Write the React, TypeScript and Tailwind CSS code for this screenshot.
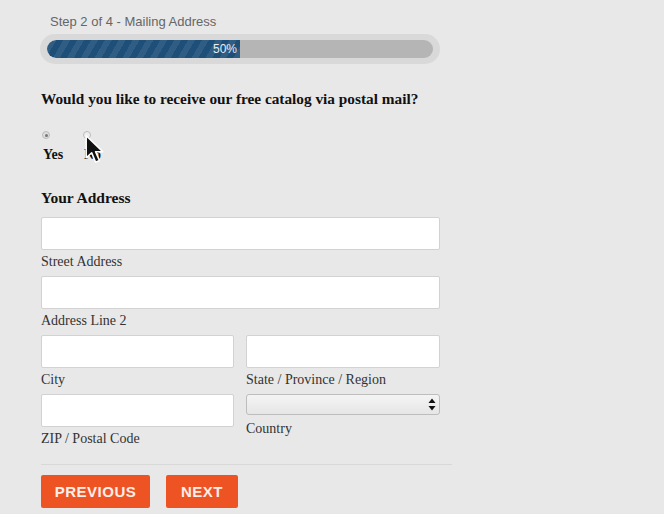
import React from "react";

const serif = "font-['Liberation_Serif','Times_New_Roman',serif]";
const sans = "font-['Liberation_Sans',Arial,sans-serif]";

function Field({ label, className = "" }: { label: string; className?: string }) {
  return (
    <div className={className}>
      <div className="h-[33px] w-full rounded-[2px] border border-[#d2d2d2] bg-white" />
      <p className={`${serif} mt-[4px] text-[14px] leading-[16px] text-[#333]`}>{label}</p>
    </div>
  );
}

function Cursor() {
  return (
    <svg width="22" height="32" viewBox="0 0 20 28" className="absolute left-[84px] top-[134px]">
      <path d="M2 1 L2 21 L7 16.5 L10.5 25 L14 23.5 L10.5 15.5 L17 15.5 Z" fill="#111" stroke="#fff" strokeWidth="1.4" strokeLinejoin="round" />
    </svg>
  );
}

export default function App() {
  return (
    <div className="relative min-h-[514px] w-full bg-[#e8e8e8]">
      <div className="w-[440px] pl-[41px] pt-[13px]">
        <p className={`${sans} pl-[9px] text-[13px] leading-[18px] text-[#666]`}>Step 2 of 4 - Mailing Address</p>

        <div className="mt-[3px] h-[30px] w-[400px] -ml-px rounded-full bg-[#d9d9d9] px-[7px] py-[6px]">
          <div className="h-[18px] w-full overflow-hidden rounded-full bg-[#b5b5b5]">
            <div className="flex h-full w-1/2 items-center justify-end rounded-l-full bg-[#1e4f79] bg-[repeating-linear-gradient(-60deg,rgba(255,255,255,0.08)_0px,rgba(255,255,255,0.08)_6px,transparent_6px,transparent_12px)] pr-[3px]">
              <span className={`${sans} text-[12px] leading-none text-white/90`}>50%</span>
            </div>
          </div>
        </div>

        <h2 className={`${serif} mt-[25px] text-[15.3px] font-bold leading-[20px] text-[#111]`}>
          Would you like to receive our free catalog via postal mail?
        </h2>

        <div className="mt-[22px] flex">
          <div className="flex w-[41px] flex-col items-start">
            <span className="ml-[1px] flex h-[8px] w-[8px] items-center justify-center rounded-full border border-[#bbb] bg-[#ddd]">
              <span className="h-[3px] w-[3px] rounded-full bg-[#777]" />
            </span>
            <span className={`${serif} ml-[2px] mt-[8px] text-[14px] font-bold leading-[16px] text-[#111]`}>Yes</span>
          </div>
          <div className="flex flex-col items-start">
            <span className="ml-[1px] h-[8px] w-[8px] rounded-full border border-[#bbb] bg-[#eee]" />
            <span className={`${serif} ml-[2px] mt-[8px] text-[14px] font-bold leading-[16px] text-[#111]`}>No</span>
          </div>
        </div>

        <h3 className={`${serif} mt-[25px] text-[15.5px] font-bold leading-[20px] text-[#111]`}>Your Address</h3>

        <div className="mt-[9px] flex flex-col gap-[6px]">
          <Field label="Street Address" />
          <Field label="Address Line 2" />
          <div className="flex gap-[12px]">
            <Field label="City" className="w-[193px]" />
            <Field label="State / Province / Region" className="flex-1" />
          </div>
          <div className="flex gap-[12px]">
            <Field label="ZIP / Postal Code" className="w-[193px]" />
            <div className="flex-1">
              <div className="flex h-[21px] w-full items-center justify-end rounded-[3px] border border-[#bdbdbd] bg-[linear-gradient(#f4f4f4,#e6e6e6)] pr-[3px]">
                <svg width="8" height="13" viewBox="0 0 8 13">
                  <path d="M4 0.5 L7.5 5 L0.5 5 Z" fill="#111" />
                  <path d="M4 12.5 L7.5 8 L0.5 8 Z" fill="#111" />
                </svg>
              </div>
              <p className={`${serif} mt-[6px] text-[14px] leading-[16px] text-[#333]`}>Country</p>
            </div>
          </div>
        </div>

        <div className="mt-[17px] h-px w-[411px] bg-[#d8d8d8]" />

        <div className="mt-[10px] flex gap-[16px]">
          <button className={`${sans} h-[33px] w-[109px] rounded-[2px] bg-[#ee5324] pt-[2px] text-[15px] font-bold tracking-[0.5px] text-white/90`}>PREVIOUS</button>
          <button className={`${sans} h-[33px] w-[72px] rounded-[2px] bg-[#ee5324] pt-[2px] text-[15px] font-bold tracking-[0.5px] text-white/90`}>NEXT</button>
        </div>
      </div>
      <Cursor />
    </div>
  );
}
